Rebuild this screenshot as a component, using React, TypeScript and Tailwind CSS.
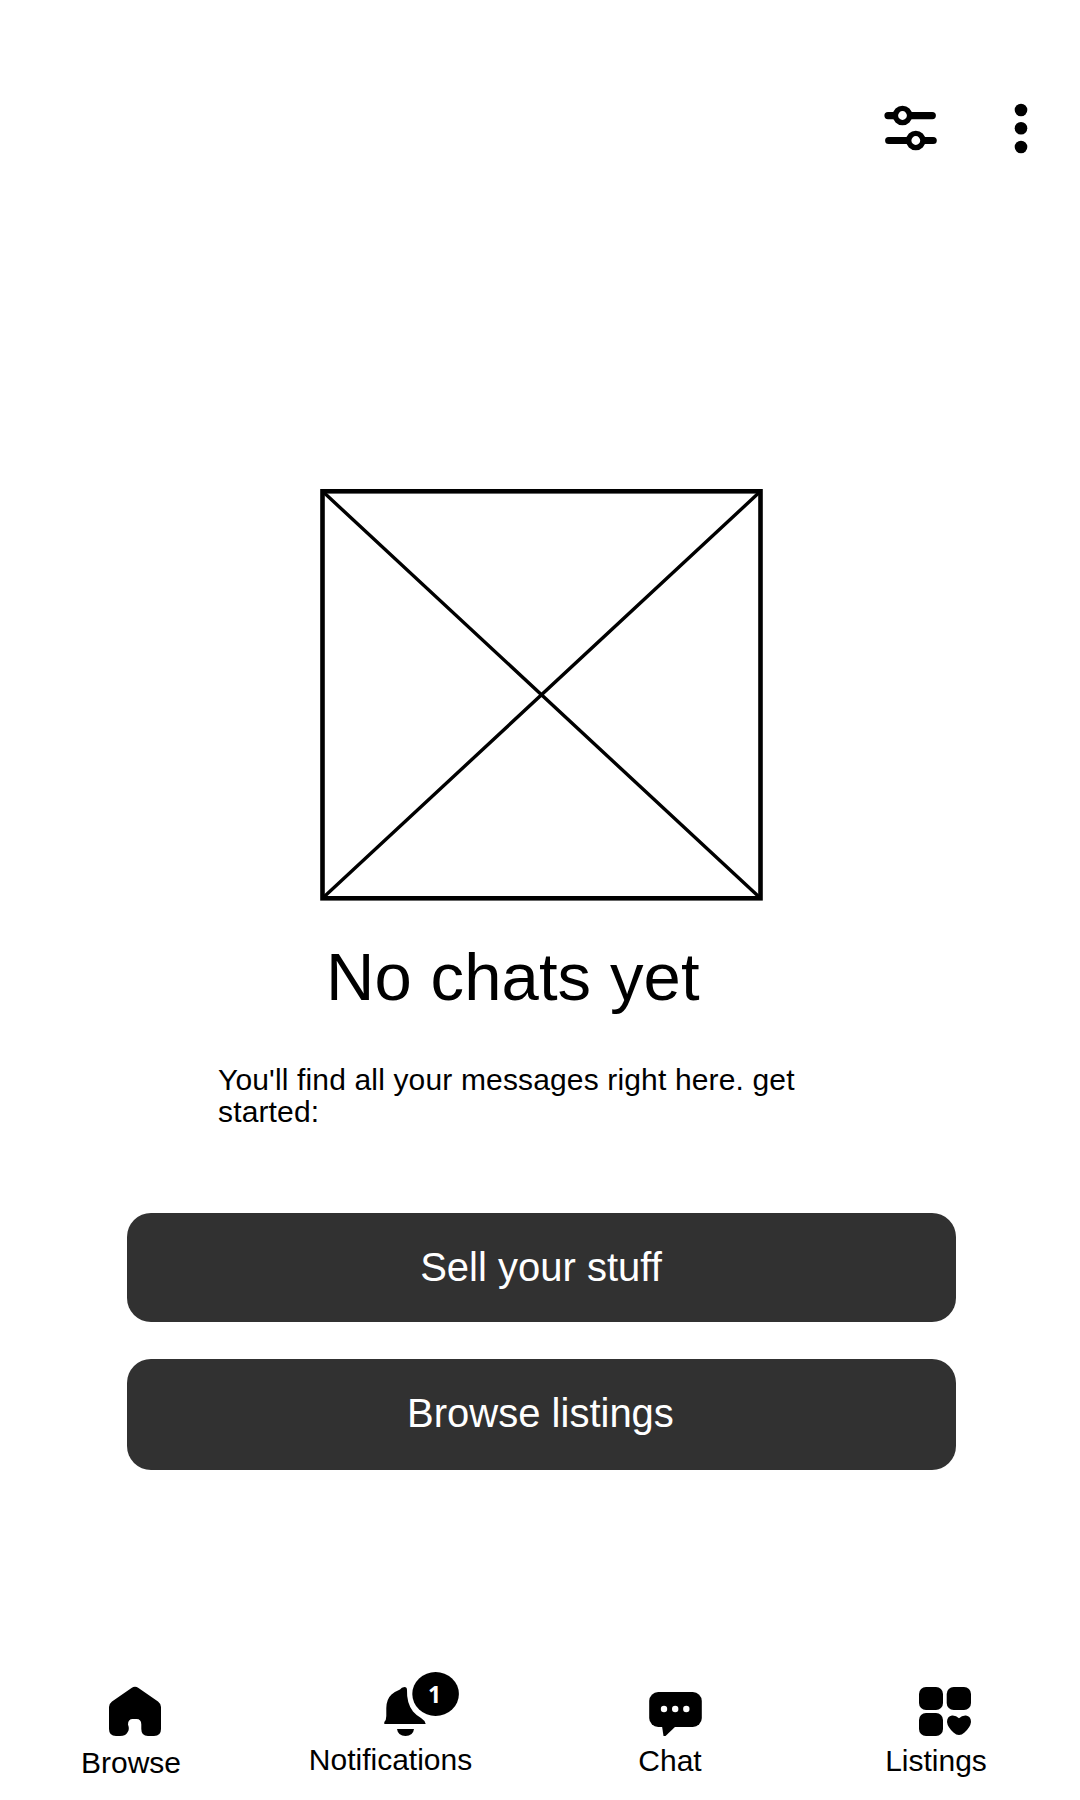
import React from "react";

function SlidersIcon() {
  return (
    <svg width="60" height="48" viewBox="880 104 60 48" fill="none" stroke="#000">
      <path d="M888 115.6H932.3M888.7 140.5H933.2" strokeWidth="7.2" strokeLinecap="round" />
      <circle cx="902.5" cy="115.5" r="7.1" strokeWidth="5.4" fill="#fff" />
      <circle cx="915.8" cy="140.5" r="7.1" strokeWidth="5.4" fill="#fff" />
    </svg>
  );
}

function MoreIcon() {
  return (
    <svg width="20" height="60" viewBox="1011 98 20 60">
      <circle cx="1021" cy="110" r="6.3" />
      <circle cx="1021" cy="128.2" r="6.3" />
      <circle cx="1021" cy="147" r="6.3" />
    </svg>
  );
}

function HomeIcon() {
  return (
    <svg width="120" height="72" viewBox="72 1668 120 72">
      <path d="M131.5 1688Q135 1685.6 138.5 1688L158 1701.5Q161 1703.8 161 1707V1729Q161 1736 154 1736H148Q141.3 1736 141.3 1729V1724.5Q141.3 1719 136.5 1719H132.8Q128 1719 128 1724.5Q129.6 1729 128 1731.5Q126 1736 120 1736H116Q109 1736 109 1729V1707Q109 1703.8 112 1701.5Z" />
    </svg>
  );
}

function BellIcon() {
  return (
    <svg width="152" height="72" viewBox="315 1668 152 72">
      <path d="M384.3 1724V1722Q386.3 1720 386.3 1716V1708Q386.5 1699 391.5 1694.5Q395 1691.5 400 1689.5Q401.500 1687 404.500 1687Q407 1687 407 1690Q406.500 1703 413 1711.5Q416.500 1715.500 421 1718Q424.500 1720 425.700 1724Z" />
      <path d="M397 1729H414Q413 1736 405.5 1736Q398 1736 397 1729Z" />
      <ellipse cx="435.6" cy="1694" rx="23.3" ry="22" />
      <text x="434.5" y="1702.5" fontSize="23" fontWeight="700" fontFamily="Open Sans, sans-serif" textAnchor="middle" fill="#fff">1</text>
    </svg>
  );
}

function ChatIcon() {
  return (
    <svg width="120" height="72" viewBox="611 1668 120 72">
      <rect x="649.2" y="1692" width="52.6" height="35" rx="9" />
      <path d="M662 1726L663.5 1736H665.5L676 1726Z" />
      <g fill="#fff">
        <circle cx="664" cy="1709" r="3.2" />
        <circle cx="675.2" cy="1709" r="3.2" />
        <circle cx="686.3" cy="1709" r="3.2" />
      </g>
    </svg>
  );
}

function ListingsIcon() {
  return (
    <svg width="120" height="72" viewBox="877 1668 120 72">
      <rect x="919" y="1687" width="24" height="23" rx="7" />
      <rect x="946.7" y="1687" width="24.3" height="23" rx="7" />
      <rect x="919" y="1713" width="24" height="23" rx="7" />
      <path d="M959 1718.3Q956 1715.3 952 1715.6Q947 1716.5 947 1722Q947.5 1727 953.5 1732.5Q959 1737.5 964.5 1732.5Q970.5 1727 971 1722Q971 1716.5 966 1715.6Q962 1715.3 959 1718.3Z" />
    </svg>
  );
}

export default function App() {
  return (
    <div className="flex h-[1800px] w-[1080px] flex-col overflow-hidden bg-white font-['Liberation_Sans',Arial,sans-serif] text-black">
      <header className="flex h-[256px] items-center justify-end gap-[71px] pr-[49px]">
        <SlidersIcon />
        <MoreIcon />
      </header>

      <main className="flex h-[1412px] flex-col">
        <svg className="mt-[232px] ml-[319px] shrink-0" width="446" height="415" viewBox="319 488 446 415" fill="none" stroke="#000">
          <rect x="322.5" y="491.3" width="438" height="407" strokeWidth="4.6" />
          <path d="M322.5 491.3L760.5 898.3M760.5 491.3L322.5 898.3" strokeWidth="3.4" />
        </svg>
        <h1 className="mt-[34px] ml-[326px] text-[67px] leading-[80px] tracking-[0.1px] whitespace-nowrap">No chats yet</h1>
        <p className="mt-[47px] ml-[218px] w-[600px] text-[30px] leading-[32px] tracking-[0.15px]">
          You'll find all your messages right here. get
          <br />
          started:
        </p>
        <div className="mt-[85px] ml-[127px] flex w-[829px] flex-col gap-[37px] text-[40px] text-white">
          <button className="h-[109px] rounded-[24px] bg-[#313131] pr-[1px] pb-[2px]">Sell your stuff</button>
          <button className="h-[111px] rounded-[24px] bg-[#313131] pr-[2px] pb-[4px]">Browse listings</button>
        </div>
      </main>

      <nav className="flex h-[132px] text-[30px] leading-[32px]">
        <a className="flex w-[264px] flex-col items-center">
          <HomeIcon />
          <span className="mt-[7px] pr-[2px]">Browse</span>
        </a>
        <a className="flex w-[254px] flex-col items-center">
          <BellIcon />
          <span className="mt-[4px] pr-[1px]">Notifications</span>
        </a>
        <a className="flex w-[305px] flex-col items-center">
          <ChatIcon />
          <span className="mt-[5px] pr-[1px]">Chat</span>
        </a>
        <a className="flex w-[228px] flex-col items-center">
          <ListingsIcon />
          <span className="mt-[5px] pr-[2px]">Listings</span>
        </a>
      </nav>
    </div>
  );
}
